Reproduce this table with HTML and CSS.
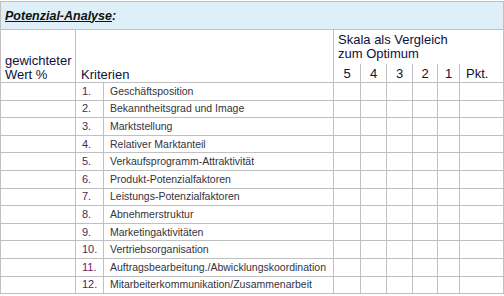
FILE: index.html
```html
<!DOCTYPE html>
<html lang="de">
<head>
<meta charset="utf-8">
<link rel="stylesheet" href="styles.css">
</head>
<body>
<table class="grid">
  <colgroup>
    <col class="c-wert"><col class="c-nr"><col class="c-krit">
    <col class="c-s5"><col class="c-s4"><col class="c-s3"><col class="c-s2"><col class="c-s1"><col class="c-pkt">
  </colgroup>
  <tr class="title-row"><td colspan="9" class="title"><span>Potenzial-Analyse</span>:</td></tr>
  <tr class="head-a">
    <td rowspan="2" class="h-bottom">gewichteter<br>Wert %</td>
    <td rowspan="2" colspan="2" class="h-bottom h-krit">Kriterien</td>
    <td colspan="6" class="h-skala">Skala als Vergleich<br>zum Optimum</td>
  </tr>
  <tr class="head-b">
    <td class="h-num">5</td><td class="h-num">4</td><td class="h-num">3</td><td class="h-num">2</td><td class="h-num">1</td><td class="h-pkt">Pkt.</td>
  </tr>
  <tr class="row"><td></td><td class="nr">1.</td><td class="krit">Geschäftsposition</td><td></td><td></td><td></td><td></td><td></td><td></td></tr>
  <tr class="row"><td></td><td class="nr">2.</td><td class="krit">Bekanntheitsgrad und Image</td><td></td><td></td><td></td><td></td><td></td><td></td></tr>
  <tr class="row"><td></td><td class="nr">3.</td><td class="krit">Marktstellung</td><td></td><td></td><td></td><td></td><td></td><td></td></tr>
  <tr class="row"><td></td><td class="nr">4.</td><td class="krit">Relativer Marktanteil</td><td></td><td></td><td></td><td></td><td></td><td></td></tr>
  <tr class="row"><td></td><td class="nr">5.</td><td class="krit">Verkaufsprogramm-Attraktivität</td><td></td><td></td><td></td><td></td><td></td><td></td></tr>
  <tr class="row"><td></td><td class="nr">6.</td><td class="krit">Produkt-Potenzialfaktoren</td><td></td><td></td><td></td><td></td><td></td><td></td></tr>
  <tr class="row"><td></td><td class="nr">7.</td><td class="krit">Leistungs-Potenzialfaktoren</td><td></td><td></td><td></td><td></td><td></td><td></td></tr>
  <tr class="row"><td></td><td class="nr">8.</td><td class="krit">Abnehmerstruktur</td><td></td><td></td><td></td><td></td><td></td><td></td></tr>
  <tr class="row"><td></td><td class="nr">9.</td><td class="krit">Marketingaktivitäten</td><td></td><td></td><td></td><td></td><td></td><td></td></tr>
  <tr class="row"><td></td><td class="nr">10.</td><td class="krit">Vertriebsorganisation</td><td></td><td></td><td></td><td></td><td></td><td></td></tr>
  <tr class="row"><td></td><td class="nr nr-alt">11.</td><td class="krit">Auftragsbearbeitung./Abwicklungskoordination</td><td></td><td></td><td></td><td></td><td></td><td></td></tr>
  <tr class="row"><td></td><td class="nr">12.</td><td class="krit">Mitarbeiterkommunikation/Zusammenarbeit</td><td></td><td></td><td></td><td></td><td></td><td></td></tr>
</table>
</body>
</html>
```
FILE: styles.css
```css
html, body {
  margin: 0;
  padding: 0;
  background: #ffffff;
}
body {
  padding-top: 1px;
  font-family: "Liberation Sans", Arial, sans-serif;
}
.grid {
  border-collapse: collapse;
  table-layout: fixed;
  width: 503px;
}
.grid td {
  border: 1px solid #c0c0c0;
  padding: 0;
  overflow: hidden;
  white-space: nowrap;
}
.c-wert { width: 75px; }
.c-nr { width: 28px; }
.c-krit { width: 230px; }
.c-s5 { width: 27px; }
.c-s4 { width: 26px; }
.c-s3 { width: 26px; }
.c-s2 { width: 25px; }
.c-s1 { width: 22px; }
.c-pkt { width: 44px; }

.title-row { height: 28px; }
.title {
  background: #deeff8;
  font-size: 12.5px;
  font-weight: bold;
  font-style: italic;
  color: #111111;
  padding-left: 4px !important;
  vertical-align: middle;
}
.title span { text-decoration: underline; }

.head-a { height: 34px; }
.head-b { height: 19px; }
.head-a td, .head-b td {
  font-size: 13px;
  line-height: 14px;
  color: #10103a;
}
.h-bottom {
  vertical-align: bottom;
  padding: 0 0 0 4px !important;
}
.h-krit { padding-left: 5px !important; }
.h-skala {
  vertical-align: top;
  padding: 3px 0 0 4px !important;
  border-bottom: none !important;
}
.head-b td {
  border-top: none !important;
  vertical-align: bottom;
  padding-bottom: 1px !important;
  text-align: center;
}
.h-pkt { text-align: left !important; padding-left: 6px !important; }

.row { height: 17.6px; }
.row td {
  font-size: 10.5px;
  line-height: 13px;
  color: #333340;
  vertical-align: middle;
}
.nr {
  padding-left: 6px !important;
  font-size: 11px !important;
  color: #4a2a5a !important;
}
.nr-alt { color: #6a1a6a !important; }
.krit { padding-left: 6px !important; }
```
